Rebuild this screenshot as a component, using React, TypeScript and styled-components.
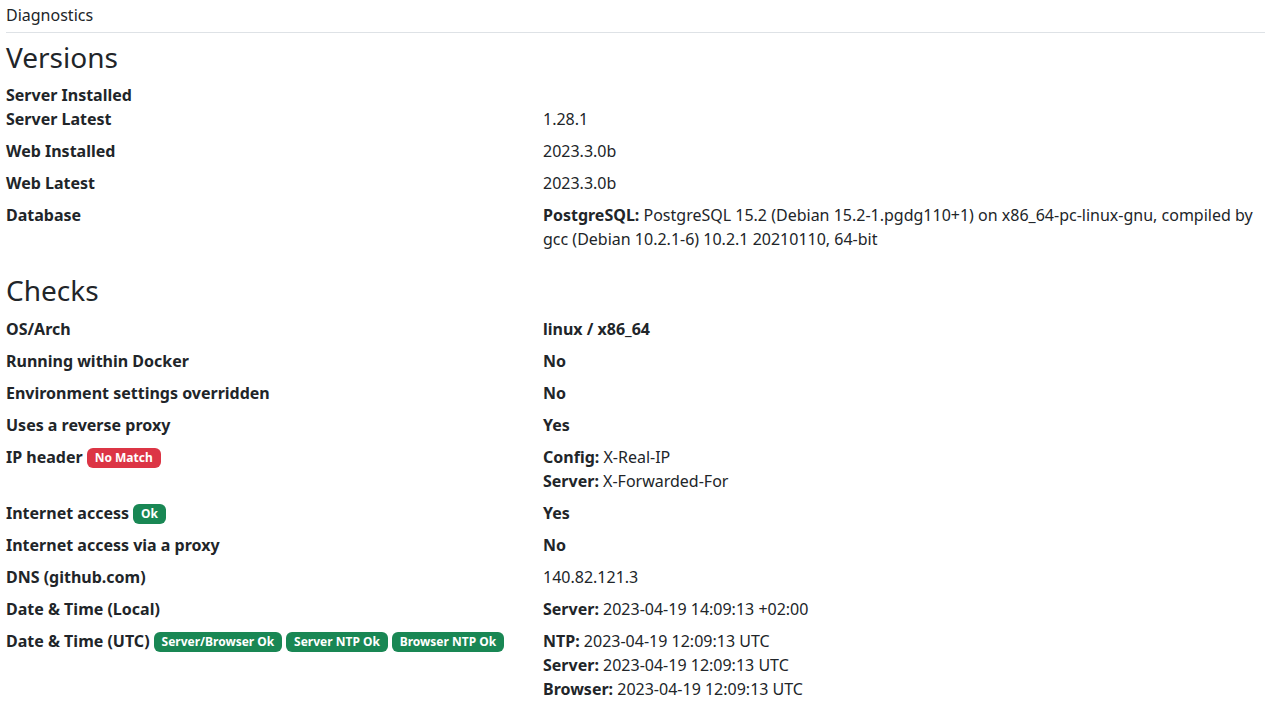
import styled, { createGlobalStyle } from 'styled-components';
import { Fragment, ReactNode } from 'react';

const GlobalStyle = createGlobalStyle`
  body {
    margin: 0;
    background: #fff;
    color: #212529;
    font-family: "Noto Sans", "Open Sans", sans-serif;
    font-size: 16px;
    line-height: 1.5;
  }
`;

const Page = styled.div`
  padding: 0 0 0 6px;
`;

const TopBar = styled.div`
  padding: 3px 0 5px;
  border-bottom: 1px solid #dee2e6;
`;

const Section = styled.section`
  padding-right: 6px;
`;

const SectionTitle = styled.h3<{ first?: boolean }>`
  margin: ${({ first }) => (first ? '8px 0 8px' : '23px 0 9.5px')};
  font-size: 28px;
  font-weight: 400;
  line-height: 1.2;
`;

const Row = styled.div<{ tight?: boolean }>`
  display: grid;
  grid-template-columns: 537px 1fr;
  margin-bottom: ${({ tight }) => (tight ? '0' : '8px')};
`;

const Label = styled.div`
  font-weight: 700;
`;

const Value = styled.div<{ strong?: boolean }>`
  font-weight: ${({ strong }) => (strong ? 700 : 400)};
`;

const Key = styled.b`
  font-weight: 700;
`;

const Badge = styled.span<{ tone: 'danger' | 'success' }>`
  display: inline-block;
  padding: 4.2px 7.8px;
  font-size: 12px;
  font-weight: 700;
  line-height: 1;
  color: #fff;
  vertical-align: 1px;
  border-radius: 6px;
  background: ${({ tone }) => (tone === 'danger' ? '#dc3545' : '#198754')};
`;

type Item = {
  label: string;
  badges?: { text: string; tone: 'danger' | 'success' }[];
  value?: ReactNode;
  strong?: boolean;
  tight?: boolean;
};

const kv = (pairs: [string, string][]) =>
  pairs.map(([k, v]) => (
    <div key={k}>
      <Key>{k}:</Key> {v}
    </div>
  ));

const versions: Item[] = [
  { label: 'Server Installed', tight: true },
  { label: 'Server Latest', value: '1.28.1' },
  { label: 'Web Installed', value: '2023.3.0b' },
  { label: 'Web Latest', value: '2023.3.0b' },
  {
    label: 'Database',
    value: (
      <>
        <Key>PostgreSQL:</Key> PostgreSQL 15.2 (Debian 15.2-1.pgdg110+1) on x86_64-pc-linux-gnu, compiled by gcc
        (Debian 10.2.1-6) 10.2.1 20210110, 64-bit
      </>
    ),
  },
];

const checks: Item[] = [
  { label: 'OS/Arch', value: 'linux / x86_64', strong: true },
  { label: 'Running within Docker', value: 'No', strong: true },
  { label: 'Environment settings overridden', value: 'No', strong: true },
  { label: 'Uses a reverse proxy', value: 'Yes', strong: true },
  {
    label: 'IP header',
    badges: [{ text: 'No Match', tone: 'danger' }],
    value: kv([
      ['Config', 'X-Real-IP'],
      ['Server', 'X-Forwarded-For'],
    ]),
  },
  { label: 'Internet access', badges: [{ text: 'Ok', tone: 'success' }], value: 'Yes', strong: true },
  { label: 'Internet access via a proxy', value: 'No', strong: true },
  { label: 'DNS (github.com)', value: '140.82.121.3' },
  { label: 'Date & Time (Local)', value: kv([['Server', '2023-04-19 14:09:13 +02:00']]) },
  {
    label: 'Date & Time (UTC)',
    badges: [
      { text: 'Server/Browser Ok', tone: 'success' },
      { text: 'Server NTP Ok', tone: 'success' },
      { text: 'Browser NTP Ok', tone: 'success' },
    ],
    value: kv([
      ['NTP', '2023-04-19 12:09:13 UTC'],
      ['Server', '2023-04-19 12:09:13 UTC'],
      ['Browser', '2023-04-19 12:09:13 UTC'],
    ]),
  },
];

const Rows = ({ items }: { items: Item[] }) => (
  <>
    {items.map((it) => (
      <Row key={it.label} tight={it.tight}>
        <Label>
          {it.label}
          {it.badges?.map((b) => (
            <Fragment key={b.text}>
              {' '}
              <Badge tone={b.tone}>{b.text}</Badge>
            </Fragment>
          ))}
        </Label>
        <Value strong={it.strong}>{it.value}</Value>
      </Row>
    ))}
  </>
);

export default function App() {
  return (
    <>
      <GlobalStyle />
      <Page>
        <TopBar>Diagnostics</TopBar>
        <Section>
          <SectionTitle first>Versions</SectionTitle>
          <Rows items={versions} />
        </Section>
        <Section>
          <SectionTitle>Checks</SectionTitle>
          <Rows items={checks} />
        </Section>
      </Page>
    </>
  );
}
